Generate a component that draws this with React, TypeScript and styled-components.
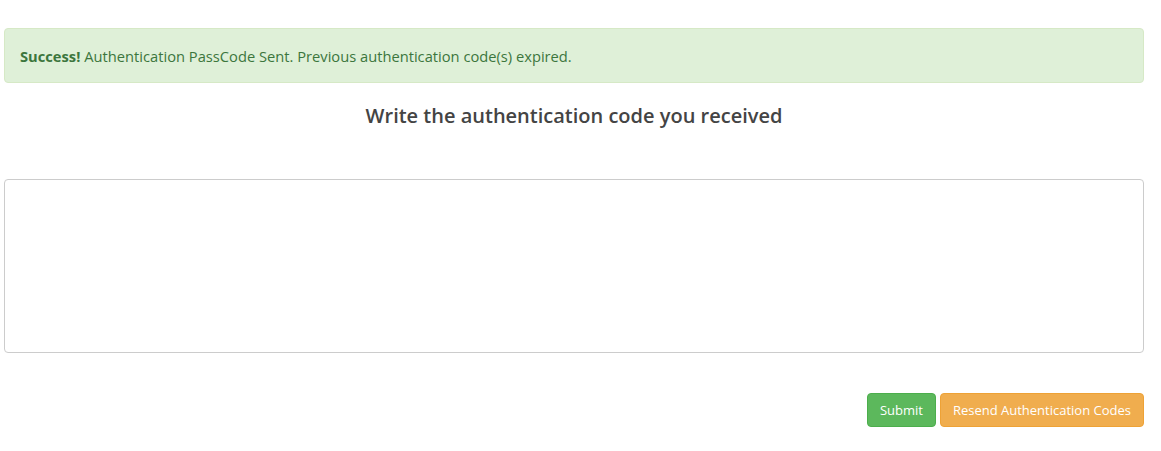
import React from "react";
import styled, { createGlobalStyle } from "styled-components";

const GlobalStyle = createGlobalStyle`
  html, body { margin: 0; padding: 0; background: #fff; }
  body {
    font-family: "Open Sans", "Noto Sans", sans-serif;
    color: #333;
  }
`;

const Page = styled.div`
  width: 1140px;
  padding: 28px 0 0 4px;
  display: flex;
  flex-direction: column;
`;

const Alert = styled.div`
  box-sizing: border-box;
  height: 55px;
  display: flex;
  align-items: center;
  padding: 0 15px;
  background: #dff0d8;
  border: 1px solid #d6e9c6;
  border-radius: 4px;
  color: #3c763d;
  font-size: 14.7px;
`;

const Strong = styled.strong`
  font-weight: 700;
  margin-right: 4px;
`;

const Heading = styled.h3`
  margin: 20px 0 0;
  text-align: center;
  font-size: 20px;
  font-weight: 600;
  line-height: 26px;
  color: #444;
`;

const CodeInput = styled.textarea`
  box-sizing: border-box;
  margin-top: 50px;
  width: 100%;
  height: 174px;
  border: 1px solid #ccc;
  border-radius: 4px;
  resize: none;
  outline: none;
  padding: 6px 12px;
  font-family: inherit;
  font-size: 14px;
`;

const Actions = styled.div`
  margin-top: 40px;
  display: flex;
  justify-content: flex-end;
  gap: 4px;
`;

const Button = styled.button<{ $variant: "success" | "warning" }>`
  box-sizing: border-box;
  height: 34px;
  padding: 0 12px 1px;
  border-radius: 4px;
  font-family: inherit;
  font-size: 13px;
  color: #fff;
  cursor: pointer;
  background: ${(p) => (p.$variant === "success" ? "#5cb85c" : "#f0ad4e")};
  border: 1px solid ${(p) => (p.$variant === "success" ? "#4cae4c" : "#eea236")};
`;

export default function App() {
  return (
    <>
      <GlobalStyle />
      <Page>
        <Alert>
          <Strong>Success!</Strong> Authentication PassCode Sent. Previous authentication code(s) expired.
        </Alert>
        <Heading>Write the authentication code you received</Heading>
        <CodeInput />
        <Actions>
          <Button $variant="success">Submit</Button>
          <Button $variant="warning">Resend Authentication Codes</Button>
        </Actions>
      </Page>
    </>
  );
}
